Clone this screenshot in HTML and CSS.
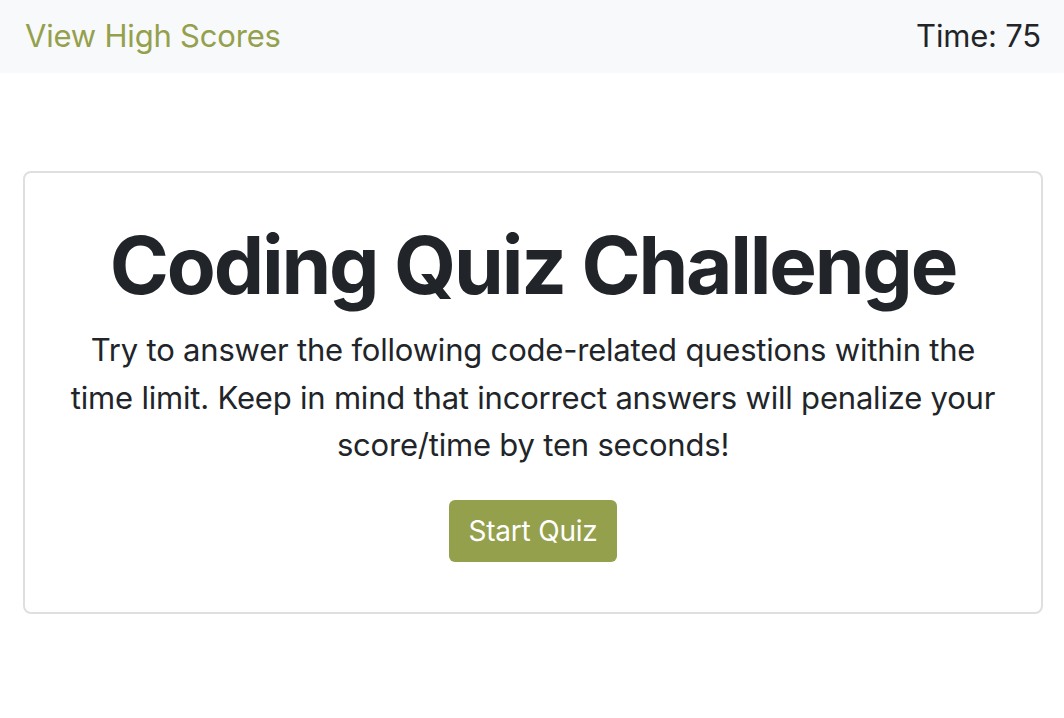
FILE: index.html
```html
<!DOCTYPE html>
<html lang="en">
<head>
<meta charset="utf-8">
<title>Coding Quiz Challenge</title>
<link rel="stylesheet" href="styles.css">
</head>
<body>
<nav class="navbar">
  <a class="nav-link" href="#">View High Scores</a>
  <span class="timer">Time: 75</span>
</nav>
<main class="container">
  <section class="card">
    <h1 class="title">Coding Quiz Challenge</h1>
    <p class="intro">Try to answer the following code-related questions within the time limit. Keep in mind that incorrect answers will penalize your score/time by ten seconds!</p>
    <button class="btn-start" type="button">Start Quiz</button>
  </section>
</main>
</body>
</html>
```
FILE: styles.css
```css
* { box-sizing: border-box; }
html, body { margin: 0; padding: 0; }
body {
  font-family: Inter, "Noto Sans", sans-serif;
  color: #212529;
  background: #fff;
  font-size: 31px;
  letter-spacing: -0.2px;
  line-height: 1.5;
}
.navbar {
  height: 73px;
  background: #f8f9fa;
  display: flex;
  align-items: center;
  justify-content: space-between;
  padding: 0 23px 0 25px;
}
.nav-link {
  color: #95a04d;
  text-decoration: none;
}
.timer { color: #212529; }
.container {
  padding: 98px 21px 0 23px;
}
.card {
  border: 2px solid #dfdfdf;
  border-radius: 8px;
  padding: 44px 40px 48px;
  text-align: center;
  display: flex;
  flex-direction: column;
  align-items: center;
}
.title {
  margin: 0;
  font-size: 80px;
  font-weight: 700;
  letter-spacing: -2.2px;
  line-height: 1.2;
}
.intro {
  margin: 13px 0 31px;
  font-size: 31px;
  line-height: 47.5px;
}
.btn-start {
  font-family: inherit;
  font-size: 28px;
  letter-spacing: -0.2px;
  line-height: 1;
  color: #fff;
  background: #95a04d;
  border: none;
  border-radius: 6px;
  padding: 0 19px;
  height: 62px;
  margin-bottom: 2px;
}
```
